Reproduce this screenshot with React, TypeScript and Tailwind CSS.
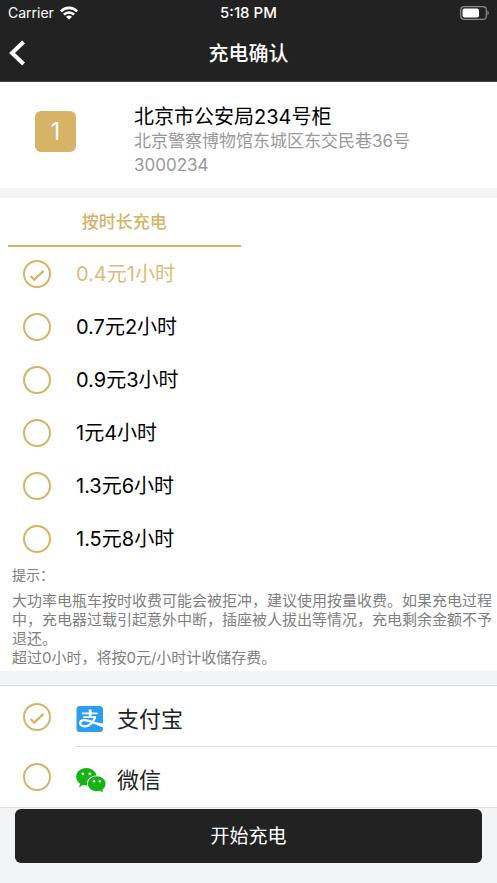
import { useState } from "react";

const plans = ["0.4元1小时", "0.7元2小时", "0.9元3小时", "1元4小时", "1.3元6小时", "1.5元8小时"];

function StatusBar() {
  return (
    <div className="grid h-[26px] grid-cols-3 items-center px-2 text-sm">
      <div className="flex items-center gap-1.5">
        <span>Carrier</span>
        <svg viewBox="0 0 18 14" className="h-3.5 w-[18px]" fill="none" stroke="currentColor" strokeWidth="2.6">
          <path d="M0.9 5.4C5.4 0.7 12.6 0.7 17.1 5.4" />
          <path d="M3.9 8.7C6.8 5.7 11.2 5.7 14.1 8.7" />
          <path d="M9 13.6L6 10.8C7.8 9.1 10.2 9.1 12 10.8Z" fill="currentColor" stroke="none" />
        </svg>
      </div>
      <span className="text-center text-[15px] font-medium">5:18 PM</span>
      <svg viewBox="0 0 29 14" className="h-3.5 w-[29px] justify-self-end" fill="none">
        <rect x="0.7" y="0.7" width="25.6" height="12.6" rx="3.4" stroke="#8a8a8a" strokeWidth="1.2" />
        <rect x="2.5" y="2.5" width="16.5" height="9" rx="1.8" fill="#fff" />
        <path d="M27.4 4.8V9.2C29.3 8.4 29.3 5.6 27.4 4.8Z" fill="#8a8a8a" />
      </svg>
    </div>
  );
}

function AlipayIcon() {
  return (
    <svg viewBox="0 0 28 26" className="h-[26px] w-7" fill="none" stroke="#fff">
      <rect x="0.5" width="26.5" height="26" rx="3.6" fill="#2b9fee" stroke="none" />
      <path d="M6 7.4H21.6M7.4 11.2H20" strokeWidth="1.8" />
      <path d="M14.2 3.6V11.2" strokeWidth="2.8" />
      <path d="M19.2 11.2C17.6 16 13.6 20.6 8.4 20.4C3 20.2 2.8 14.8 7.4 14.2C12.6 13.6 18.4 17.4 27 20" strokeWidth="2.2" />
      <path d="M15.6 15.6L27 17.6V21.6Z" fill="#fff" stroke="none" />
    </svg>
  );
}

function WechatIcon() {
  return (
    <svg viewBox="0 0 30 26" className="h-[26px] w-[30px]" fill="#14b414">
      <path d="M10.4 1C4.7 1 0.2 4.7 0.2 9.7C0.2 12.7 1.7 15.2 4.1 16.8L3 20.3L7 18C8.4 18.4 9.6 18.6 11.3 18.4C9.8 12.8 14.4 8.4 20.6 8.4C19.6 4.2 15.4 1 10.4 1Z" />
      <path d="M20.8 9.2C15.9 9.2 11.9 12.5 11.9 16.8C11.9 21 15.9 24.2 20.8 24.2C21.9 24.2 22.9 24 23.9 23.7L27.1 25.4L26.2 22.6C28.3 21.3 29.6 19.2 29.6 16.8C29.6 12.5 25.7 9.2 20.8 9.2Z" />
      <g fill="#fff">
        <circle cx="6.8" cy="6.8" r="1.4" />
        <circle cx="13.8" cy="6.8" r="1.4" />
        <circle cx="18" cy="14.2" r="1.2" />
        <circle cx="23.8" cy="14.2" r="1.2" />
      </g>
    </svg>
  );
}

type RadioProps = { name: string; checked: boolean; onChange: () => void };

function Radio({ name, checked, onChange }: RadioProps) {
  return (
    <span className="grid size-7 shrink-0 place-items-center text-[#d7b367]">
      <input
        type="radio"
        name={name}
        checked={checked}
        onChange={onChange}
        className="col-start-1 row-start-1 size-7 appearance-none rounded-full border-2 border-[#d7b367]"
      />
      {checked && (
        <svg viewBox="0 0 28 28" className="pointer-events-none col-start-1 row-start-1 size-7" fill="none" stroke="currentColor" strokeWidth="2.4">
          <path d="M7.6 16L11.2 19.6L20.6 10.8" />
        </svg>
      )}
    </span>
  );
}

export default function App() {
  const [plan, setPlan] = useState(0);
  const [pay, setPay] = useState("alipay");

  return (
    <div className="min-h-screen bg-[#f3f4f6] pb-5 font-[Inter,'Noto_Sans_CJK_SC',sans-serif] text-black">
      <header className="border-b border-[#444] bg-[#222] text-white">
        <StatusBar />
        <div className="grid h-[55px] grid-cols-3 items-center px-2">
          <button type="button" aria-label="返回" className="w-5">
            <svg viewBox="0 0 20 28" className="h-7 w-5" fill="none" stroke="currentColor" strokeWidth="4">
              <path d="M15.6 2L4 13L15.6 24" />
            </svg>
          </button>
          <h1 className="text-center text-xl font-medium">充电确认</h1>
        </div>
      </header>

      <section className="flex h-[106px] bg-white">
        <div className="w-[134px] shrink-0 pt-[29px] pl-[35px]">
          <div className="flex size-[41px] items-center justify-center rounded-md bg-[#d7b367] text-2xl text-white">1</div>
        </div>
        <div className="pt-[23px]">
          <h2 className="text-xl leading-6">北京市公安局234号柜</h2>
          <p className="text-[17px] leading-6 text-[#999]">北京警察博物馆东城区东交民巷36号</p>
          <p className="text-[17px] leading-6 text-[#999]">3000234</p>
        </div>
      </section>

      <main className="mt-2.5 bg-white">
        <div className="grid grid-cols-2 px-2">
          <button type="button" className="mr-2 h-[49px] border-b-2 border-[#d7b367] pt-0.5 text-[17px] font-medium text-[#d7b367]">
            按时长充电
          </button>
        </div>
        <div role="radiogroup" aria-label="按时长充电">
          {plans.map((label, i) => (
            <label key={label} className="flex h-[53px] items-center gap-[25px] pl-[23px] text-xl has-checked:text-[#dcbb78]">
              <Radio name="plan" checked={plan === i} onChange={() => setPlan(i)} />
              {label}
            </label>
          ))}
        </div>
        <div className="pr-1 pb-1 pl-3 text-[15px] leading-[19px] text-[#808080]">
          <p className="mb-1.5 text-sm">提示：</p>
          <p>大功率电瓶车按时收费可能会被拒冲，建议使用按量收费。如果充电过程中，充电器过载引起意外中断，插座被人拔出等情况，充电剩余金额不予退还。</p>
          <p>超过0小时，将按0元/小时计收储存费。</p>
        </div>
      </main>

      <section role="radiogroup" aria-label="支付方式" className="mt-3.5 border-y border-[#dcdcde] bg-white text-[22px] text-[#222]">
        <label className="flex h-[61px] items-center gap-[25px] pl-[23px]">
          <Radio name="pay" checked={pay === "alipay"} onChange={() => setPay("alipay")} />
          <span className="flex h-full flex-1 items-center border-b border-[#dcdcde] pt-1.5">
            <span className="w-[41px]">
              <AlipayIcon />
            </span>
            支付宝
          </span>
        </label>
        <label className="flex h-[60px] items-center gap-[25px] pl-[23px]">
          <Radio name="pay" checked={pay === "wechat"} onChange={() => setPay("wechat")} />
          <span className="flex h-full flex-1 items-center pt-1.5">
            <span className="w-[41px]">
              <WechatIcon />
            </span>
            微信
          </span>
        </label>
      </section>

      <div className="px-[15px] pt-px">
        <button type="button" className="h-[54px] w-full rounded-md bg-[#222] pt-0.5 text-[19px] text-white">
          开始充电
        </button>
      </div>
    </div>
  );
}
